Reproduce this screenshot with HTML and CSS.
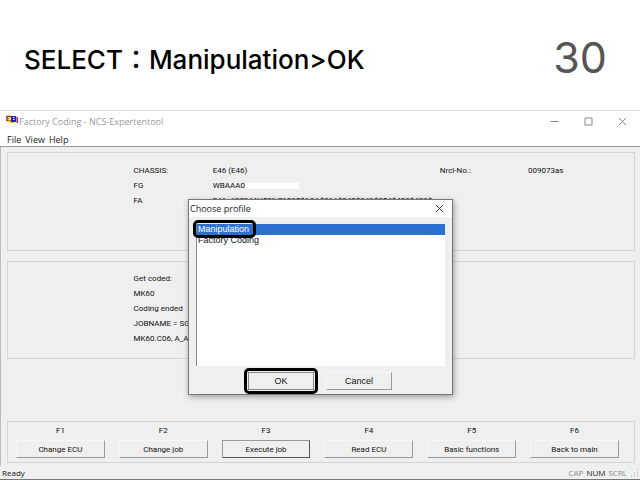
FILE: index.html
```html
<!DOCTYPE html>
<html lang="en">

<head>
    <meta charset="UTF-8">
    <meta name="viewport" content="width=device-width, initial-scale=1.0">
    <title>Factory Coding - NCS-Expertentool</title>
    <link rel="stylesheet" href="styles.css">
</head>

<body>
    <header class="slide-header">
        <h1>SELECT：Manipulation&gt;OK</h1>
        <span class="slide-number">30</span>
    </header>

    <main class="window">
        <div class="title-bar">
            <svg class="app-icon" viewBox="0 0 12 9" aria-hidden="true">
                <path d="M5 1.5H1v4h4" stroke="#a83228" stroke-width="1.5"/>
                <path d="M2 3.5h2M3 5l2 3" stroke="#e8b030" stroke-width="1.5"/>
                <rect x="5" y="1" width="5" height="6" fill="#2420b8"/>
                <path d="M7 2.5h1.5M7 4.5h1.5" stroke="#fff"/>
                <path d="M11.2 2v6" stroke="#8c2a80" stroke-width="1.5"/>
                <path d="M6 7.5h2" stroke="#e8b030"/>
            </svg>
            <span class="title">Factory Coding - NCS-Expertentool</span>
            <div class="window-controls">
                <button type="button" aria-label="Minimize"><svg viewBox="0 0 9 9"><path d="M0.5 4.5h8"/></svg></button>
                <button type="button" aria-label="Maximize"><svg viewBox="0 0 9 9"><path d="M1 1h7v7h-7z"/></svg></button>
                <button type="button" aria-label="Close"><svg viewBox="0 0 9 9"><path d="M1 1l7 7M8 1l-7 7"/></svg></button>
            </div>
        </div>
        <nav class="menu-bar">
            <a href="#">File</a>
            <a href="#">View</a>
            <a href="#">Help</a>
        </nav>

        <div class="workspace">
            <!-- Vehicle data -->
            <section class="panel vehicle">
                <span>CHASSIS:</span><span>E46 (E46)</span><span>Nrcl-No.:</span><span>009073as</span>
                <span>FG</span><span class="vin">WBAAA0<span class="masked"></span></span><span></span><span></span>
                <span>FA</span><span class="order">E46_#0784AV52%Z1035$1CA$216$240$249$254$428$423$</span>
            </section>

            <!-- Coding result -->
            <section class="panel result">
                <p>Get coded:</p>
                <p>MK60</p>
                <p>Coding ended</p>
                <p>JOBNAME = SG</p>
                <p>MK60.C06, A_AS</p>
            </section>

            <!-- Function keys -->
            <section class="panel keys">
                <div class="key"><label for="f1">F1</label><button type="button" id="f1">Change ECU</button></div>
                <div class="key"><label for="f2">F2</label><button type="button" id="f2">Change job</button></div>
                <div class="key"><label for="f3">F3</label><button type="button" id="f3" class="active">Execute job</button></div>
                <div class="key"><label for="f4">F4</label><button type="button" id="f4">Read ECU</button></div>
                <div class="key"><label for="f5">F5</label><button type="button" id="f5">Basic functions</button></div>
                <div class="key"><label for="f6">F6</label><button type="button" id="f6">Back to main</button></div>
            </section>
        </div>

        <footer class="status-bar">
            <span>Ready</span>
            <div class="locks"><span>CAP</span><span class="on">NUM</span><span>SCRL</span></div>
            <svg class="grip" viewBox="0 0 8 8" aria-hidden="true"><path d="M6 1h1M6 4h1M3 4h1M6 7h1M3 7h1M0 7h1"/></svg>
        </footer>

        <div class="dialog" role="dialog" aria-labelledby="dialogTitle">
            <div class="dialog-title">
                <label id="dialogTitle" for="profile">Choose profile</label>
                <button type="button" aria-label="Close"><svg viewBox="0 0 9 9"><path d="M1 1l7 7M8 1l-7 7"/></svg></button>
            </div>
            <div class="dialog-body">
                <select id="profile" size="4">
                    <option selected>Manipulation</option>
                    <option>Factory Coding</option>
                </select>
                <div class="mark mark-option"></div>
                <div class="dialog-buttons">
                    <div class="mark-ok"><button type="button" class="ok">OK</button></div>
                    <button type="button">Cancel</button>
                </div>
            </div>
        </div>
    </main>
</body>

</html>
```

FILE: styles.css
```css
* {
    box-sizing: border-box;
}

body {
    margin: 0;
    min-height: 100vh;
    display: flex;
    flex-direction: column;
    background-color: #fff;
    color: #111;
    font-family: Roboto, "Liberation Sans", sans-serif;
    font-size: 8px;
}

button {
    padding: 0;
    border: none;
    background: none;
    color: inherit;
    font: inherit;
}

svg {
    display: block;
    fill: none;
}

.slide-header {
    display: flex;
    align-items: center;
    justify-content: space-between;
    height: 110px;
    padding: 4px 33px 0 24px;
}

h1 {
    margin: 0;
    color: #000;
    font-family: Inter, "Noto Sans CJK JP", sans-serif;
    font-size: 26px;
    font-weight: 500;
}

.slide-number {
    color: #555;
    font-family: Inter, sans-serif;
    font-size: 43px;
    font-weight: 400;
}

.window {
    position: relative;
    flex: 1;
    display: flex;
    flex-direction: column;
    border-top: 1px solid #ddd;
}

.title-bar {
    display: flex;
    align-items: center;
    height: 21px;
    padding: 0 13px 0 6px;
    color: #999;
    font-family: "Open Sans", "Noto Sans", sans-serif;
    font-size: 9px;
}

.app-icon {
    width: 12px;
    height: 9px;
    margin: 0 1px 4px 0;
}

.title {
    flex: 1;
}

.window-controls {
    display: flex;
    gap: 25px;
}

.window-controls svg,
.dialog-title svg {
    width: 9px;
    height: 9px;
    stroke: #888;
}

.menu-bar {
    display: flex;
    align-items: center;
    gap: 4px;
    height: 15px;
    padding: 0 7px;
    border-bottom: 1px solid #999;
    font-family: "Open Sans", "Noto Sans", sans-serif;
    font-size: 9px;
}

.menu-bar a {
    color: #222;
    text-decoration: none;
}

.workspace {
    flex: 1;
    display: flex;
    flex-direction: column;
    padding: 5px 5px 3px 6px;
    border-left: 1px solid #bbb;
    background-color: #efefef;
}

.panel {
    border: 1px solid #d4d4d4;
}

.vehicle {
    display: grid;
    grid-template-columns: 79fr 227fr 88fr 106fr;
    grid-auto-rows: 15px;
    height: 99px;
    padding: 10px 0 0 20%;
    line-height: 15px;
}

.vin {
    display: flex;
    align-items: center;
}

.masked {
    width: 54px;
    height: 6px;
    background-color: #fff;
}

.order {
    grid-column: 2 / 5;
    white-space: nowrap;
}

.result {
    height: 98px;
    margin: 10px 0 62px;
    padding: 9px 0 0 20%;
    line-height: 15px;
}

.result p {
    margin: 0;
}

.keys {
    display: flex;
    gap: 14px;
    height: 42px;
    padding: 3px 15px 3px 8px;
}

.key {
    flex: 1;
    display: flex;
    flex-direction: column;
    gap: 3px;
    text-align: center;
}

.key label {
    line-height: 12px;
}

.key button,
.dialog-buttons button {
    height: 18px;
    border: 1px solid;
    border-color: #f6f6f6 #999 #999 #f6f6f6;
}

.key .active {
    border-color: #999 #555 #555 #999;
}

.status-bar {
    display: flex;
    align-items: center;
    height: 14px;
    padding: 0 1px 0 2px;
    border-bottom: 1px solid #777;
    background-color: #f0f0f0;
    font-family: "Open Sans", "Noto Sans", sans-serif;
    font-size: 8px;
}

.locks {
    display: flex;
    gap: 3px;
    margin-left: auto;
    color: #888;
}

.locks .on {
    color: #222;
}

.grip {
    width: 8px;
    height: 8px;
    margin-left: 4px;
    stroke: #aaa;
}

.dialog {
    position: absolute;
    top: 88px;
    left: calc(50% - 132px);
    width: 265px;
    border: 1px solid #777;
    background-color: #efefef;
    box-shadow: 1px 2px 6px rgba(0, 0, 0, 0.35);
    font-family: "Liberation Sans", Arial, sans-serif;
    font-size: 9px;
}

.dialog-title {
    display: flex;
    align-items: center;
    justify-content: space-between;
    height: 17px;
    padding: 0 8px 0 1px;
    background-color: #fff;
    color: #222;
    font-family: "Open Sans", "Noto Sans", sans-serif;
}

.dialog-title svg {
    stroke: #333;
}

.dialog-body {
    position: relative;
    padding: 7px 7px 0;
}

select {
    display: block;
    width: 100%;
    height: 142px;
    padding: 0;
    border: none;
    border-left: 1px solid #888;
    border-radius: 0;
    outline: none;
    background-color: #fff;
    color: #111;
    font: 9px "Liberation Sans", Arial, sans-serif;
    overflow: hidden;
}

option {
    min-height: 11px;
    padding: 0 1px;
    line-height: 11px;
}

option:checked {
    background: #2e70d0 linear-gradient(#2e70d0, #2e70d0);
    -webkit-text-fill-color: #fff;
}

/* rings that point out the profile and the OK button */
.mark {
    position: absolute;
    border: 3px solid #000;
    border-radius: 5px;
}

.mark-option {
    top: 3px;
    left: 4px;
    width: 63px;
    height: 18px;
}

.dialog-buttons {
    display: flex;
    align-items: center;
    justify-content: center;
    gap: 8px;
    height: 26px;
    margin-top: 2px;
    padding-right: 5px;
}

.dialog-buttons button {
    width: 66px;
}

.mark-ok {
    padding: 1px;
    border: 3px solid #000;
    border-radius: 5px;
}

.dialog-buttons .ok {
    display: block;
    border-color: #888;
}
```
